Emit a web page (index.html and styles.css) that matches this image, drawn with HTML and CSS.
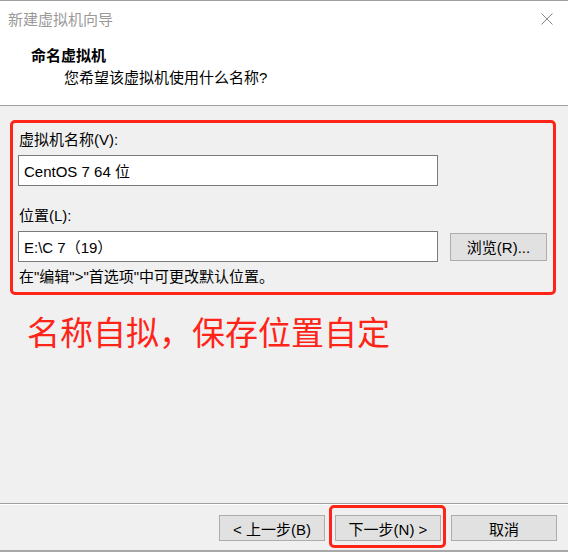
FILE: index.html
```html
<html lang="zh-CN">
<head>
    <meta charset="UTF-8">
    <title>新建虚拟机向导</title>
    <link rel="stylesheet" href="styles.css">
</head>
<body>
<div id="wizard">
    <div class="top">
        <div class="titlebar">
            <span class="title">新建虚拟机向导</span>
            <a href="javascript:;" class="close">
                <svg width="12" height="12" viewBox="0 0 12 12"><path d="M0.5 0.5L11.5 11.5M11.5 0.5L0.5 11.5" stroke="#8a8a8a" stroke-width="1" fill="none"/></svg>
            </a>
        </div>
        <div class="header">
            <h3>命名虚拟机</h3>
            <p>您希望该虚拟机使用什么名称?</p>
        </div>
    </div>
    <div class="content">
        <div class="mark">
            <label for="vmname">虚拟机名称(V):</label>
            <div class="row">
                <input type="text" id="vmname" value="CentOS 7 64 位"/>
            </div>
            <label for="vmpath" class="second">位置(L):</label>
            <div class="row">
                <input type="text" id="vmpath" value="E:\C 7（19）"/>
                <button type="button" class="btn browse">浏览(R)...</button>
            </div>
            <div class="tip">在"编辑"&gt;"首选项"中可更改默认位置。</div>
        </div>
        <div class="note">名称自拟，保存位置自定</div>
    </div>
    <div class="footer">
        <button type="button" class="btn">&lt; 上一步(B)</button>
        <button type="button" class="btn next">下一步(N) &gt;</button>
        <button type="button" class="btn">取消</button>
    </div>
</div>
</body>
</html>
```
FILE: styles.css
```css
*{
    padding:0px;
    margin:0px;
    box-sizing:border-box;
}
body{
    font-family:"Liberation Sans","Noto Sans CJK SC",sans-serif;
    font-size:15px;
    background:#f0f0f0;
    color:#000;
}
#wizard{
    width:568px;
    height:552px;
    display:flex;
    flex-direction:column;
    border-top:1px solid #a0a0a0;
}
.top{
    background:#fff;
    border-bottom:1px solid #a0a0a0;
    height:105px;
}
.titlebar{
    height:35px;
    display:flex;
    align-items:center;
    justify-content:space-between;
    padding:0px 15px 0px 8px;
}
.titlebar .title{
    color:#9a9a9a;
    font-size:15px;
}
.titlebar .close{
    display:block;
    width:12px;
    height:12px;
    line-height:0;
}
.header{
    padding:10px 0px 0px 31px;
}
.header h3{
    font-size:15px;
    line-height:20px;
    font-weight:bold;
}
.header p{
    padding-left:33px;
    margin-top:2px;
    line-height:20px;
}
.content{
    flex:1;
    padding:14px 12px 0px 10px;
}
.mark{
    border:3px solid #ff2418;
    border-radius:5px;
    padding:7px 6px 5px 5px;
}
.mark label{
    display:block;
    line-height:20px;
    padding-left:1px;
}
.mark label.second{
    margin-top:20px;
}
.mark .row{
    display:flex;
    align-items:center;
    gap:12px;
    margin-top:5px;
}
.mark input{
    width:420px;
    height:31px;
    border:1px solid #7a7a7a;
    background:#fff;
    font:inherit;
    padding:0px 5px;
    outline:none;
}
.btn{
    width:106px;
    height:26px;
    background:#e1e1e1;
    border:1px solid #adadad;
    font:inherit;
    color:#000;
}
.mark .browse{
    width:97px;
    height:28px;
}
.tip{
    margin-top:5px;
    line-height:20px;
    padding-left:1px;
}
.note{
    margin:19px 0px 0px 17px;
    font-size:33px;
    line-height:40px;
    color:#ff2418;
}
.footer{
    position:relative;
    height:49px;
    border-top:1px solid #a0a0a0;
    box-shadow:inset 0px 1px 0px #fff;
    border-bottom:2px solid #a8a8a8;
    display:flex;
    justify-content:flex-end;
    align-items:flex-start;
    gap:10px;
    padding:11px 11px 0px 0px;
}
.footer .next{
    position:relative;
}
.footer .next::after{
    content:"";
    position:absolute;
    left:-7px;
    right:-6px;
    top:-11px;
    bottom:-8px;
    border:3px solid #ff2418;
    border-radius:5px;
}
```
